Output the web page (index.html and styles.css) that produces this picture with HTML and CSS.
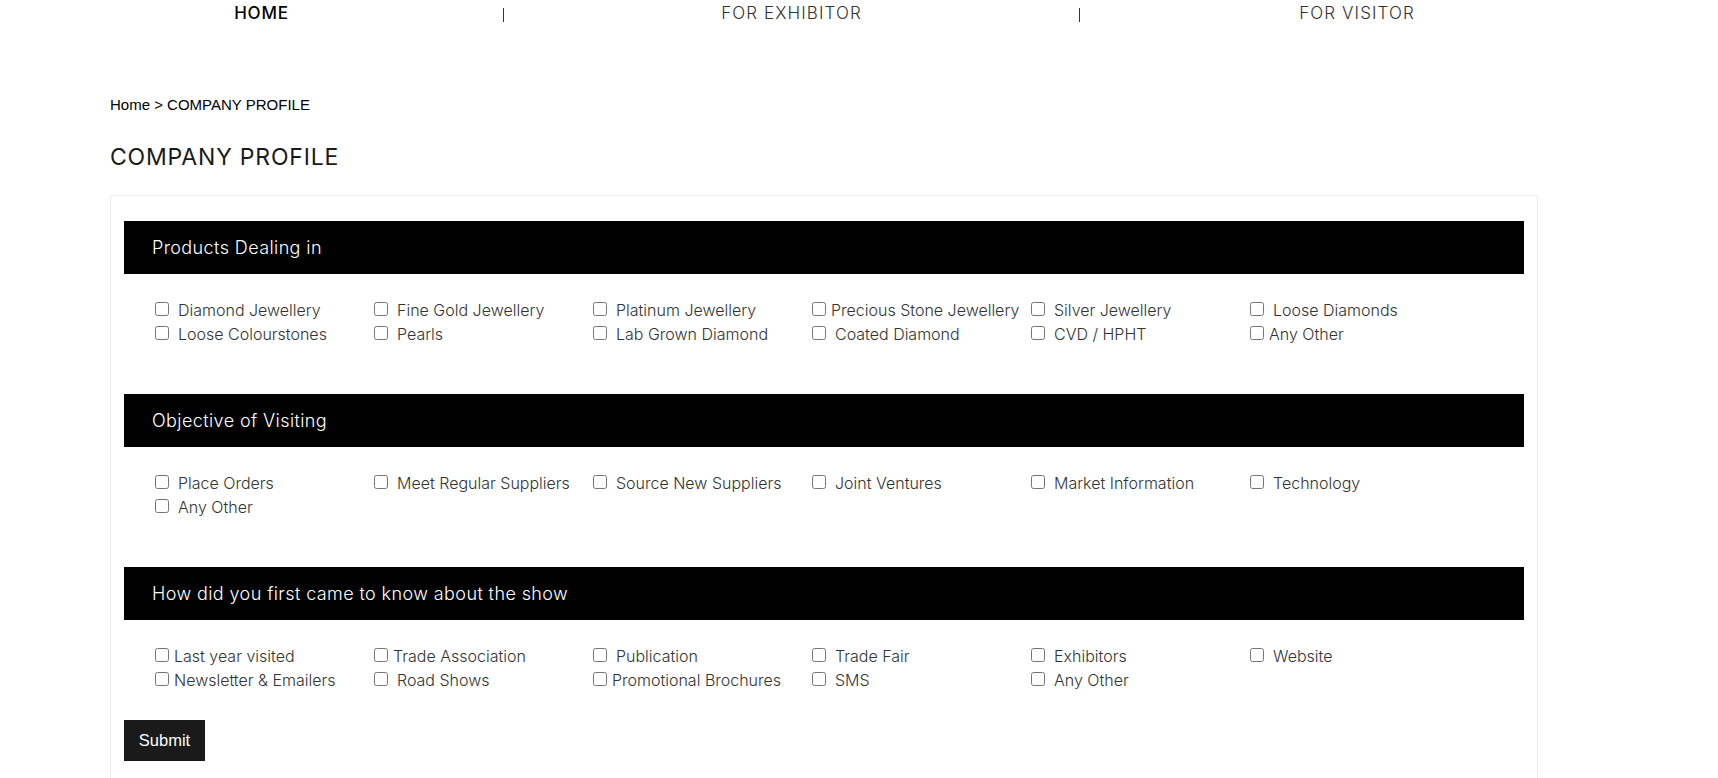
FILE: index.html
```html
<!DOCTYPE html>
<html lang="en">
<head>
<meta charset="utf-8">
<title>Company Profile</title>
<link rel="stylesheet" href="styles.css">
</head>
<body>
<nav class="topnav">
  <a class="nav-item active" href="#">HOME</a>
  <span class="nav-sep"></span>
  <a class="nav-item" href="#">FOR EXHIBITOR</a>
  <span class="nav-sep"></span>
  <a class="nav-item" href="#">FOR VISITOR</a>
</nav>

<main class="page">
  <div class="crumbs">Home &gt; COMPANY PROFILE</div>
  <h1 class="title">COMPANY PROFILE</h1>

  <form class="panel">
    <section class="group">
      <h2 class="group-head">Products Dealing in</h2>
      <div class="opts">
        <label class="opt"><input type="checkbox"><span class="t">Diamond Jewellery</span></label>
        <label class="opt"><input type="checkbox"><span class="t">Fine Gold Jewellery</span></label>
        <label class="opt"><input type="checkbox"><span class="t">Platinum Jewellery</span></label>
        <label class="opt"><input type="checkbox"><span class="t tight">Precious Stone Jewellery</span></label>
        <label class="opt"><input type="checkbox"><span class="t">Silver Jewellery</span></label>
        <label class="opt"><input type="checkbox"><span class="t">Loose Diamonds</span></label>
        <label class="opt"><input type="checkbox"><span class="t">Loose Colourstones</span></label>
        <label class="opt"><input type="checkbox"><span class="t">Pearls</span></label>
        <label class="opt"><input type="checkbox"><span class="t">Lab Grown Diamond</span></label>
        <label class="opt"><input type="checkbox"><span class="t">Coated Diamond</span></label>
        <label class="opt"><input type="checkbox"><span class="t">CVD / HPHT</span></label>
        <label class="opt"><input type="checkbox"><span class="t tight">Any Other</span></label>
      </div>
    </section>

    <section class="group">
      <h2 class="group-head">Objective of Visiting</h2>
      <div class="opts">
        <label class="opt"><input type="checkbox"><span class="t">Place Orders</span></label>
        <label class="opt"><input type="checkbox"><span class="t">Meet Regular Suppliers</span></label>
        <label class="opt"><input type="checkbox"><span class="t">Source New Suppliers</span></label>
        <label class="opt"><input type="checkbox"><span class="t">Joint Ventures</span></label>
        <label class="opt"><input type="checkbox"><span class="t">Market Information</span></label>
        <label class="opt"><input type="checkbox"><span class="t">Technology</span></label>
        <label class="opt"><input type="checkbox"><span class="t">Any Other</span></label>
      </div>
    </section>

    <section class="group last">
      <h2 class="group-head">How did you first came to know about the show</h2>
      <div class="opts">
        <label class="opt"><input type="checkbox"><span class="t tight">Last year visited</span></label>
        <label class="opt"><input type="checkbox"><span class="t tight">Trade Association</span></label>
        <label class="opt"><input type="checkbox"><span class="t">Publication</span></label>
        <label class="opt"><input type="checkbox"><span class="t">Trade Fair</span></label>
        <label class="opt"><input type="checkbox"><span class="t">Exhibitors</span></label>
        <label class="opt"><input type="checkbox"><span class="t">Website</span></label>
        <label class="opt"><input type="checkbox"><span class="t tight">Newsletter &amp; Emailers</span></label>
        <label class="opt"><input type="checkbox"><span class="t">Road Shows</span></label>
        <label class="opt"><input type="checkbox"><span class="t tight">Promotional Brochures</span></label>
        <label class="opt"><input type="checkbox"><span class="t">SMS</span></label>
        <label class="opt"><input type="checkbox"><span class="t">Any Other</span></label>
      </div>
    </section>

    <button type="button" class="submit">Submit</button>
  </form>
</main>
</body>
</html>
```

FILE: styles.css
```css
html, body {
  margin: 0;
  padding: 0;
  background: #fff;
}

body {
  font-family: Inter, "Open Sans", sans-serif;
  color: #333;
}

.topnav {
  display: grid;
  grid-template-columns: 483px 1px 575px 1px 554px;
  padding-left: 20px;
  height: 26px;
  align-items: center;
}

.nav-item {
  display: block;
  text-align: center;
  font-size: 17px;
  line-height: 26px;
  font-weight: 300;
  letter-spacing: 1.1px;
  color: #333;
  text-decoration: none;
}

.nav-item.active {
  font-weight: 500;
  letter-spacing: 0.8px;
  color: #000;
}

.nav-sep {
  display: block;
  width: 1px;
  height: 14px;
  margin-top: 3px;
  background: #333;
}

.page {
  margin-left: 110px;
  width: 1428px;
}

.crumbs {
  margin-top: 70px;
  font-family: "Liberation Sans", Arial, sans-serif;
  font-size: 15px;
  line-height: 18px;
  color: #000;
}

.title {
  margin: 30px 0 0;
  font-size: 23px;
  line-height: 26px;
  font-weight: 400;
  color: #1a1a1a;
  letter-spacing: 0.8px;
}

.panel {
  margin-top: 25px;
  border: 1px solid #eee;
  padding: 25px 13px 60px;
  box-sizing: border-box;
  width: 1428px;
}

.group {
  margin-bottom: 20px;
}

.group-head {
  margin: 0;
  height: 53px;
  padding-left: 28px;
  background: #000;
  color: #fff;
  font-size: 18px;
  font-weight: 300;
  letter-spacing: 0.4px;
  line-height: 53px;
}

.opts {
  display: grid;
  grid-template-columns: repeat(6, 219px);
  padding: 24px 0 28px 27px;
}

.opt {
  display: block;
  font-size: 16px;
  line-height: 24px;
  font-weight: 300;
  color: #333;
  white-space: nowrap;
}

.opt input {
  margin: 3px 3px 3px 4px;
  width: 14px;
  height: 14px;
  vertical-align: 0;
}

.t {
  padding-left: 6px;
}

.t.tight {
  padding-left: 2px;
}

.group.last {
  margin-bottom: 0;
}

.submit {
  display: block;
  width: 81px;
  height: 41px;
  padding: 0;
  border: 0;
  background: #1a1a1a;
  color: #fff;
  font-family: "Liberation Sans", Arial, sans-serif;
  font-size: 16.5px;
  cursor: pointer;
}
```
